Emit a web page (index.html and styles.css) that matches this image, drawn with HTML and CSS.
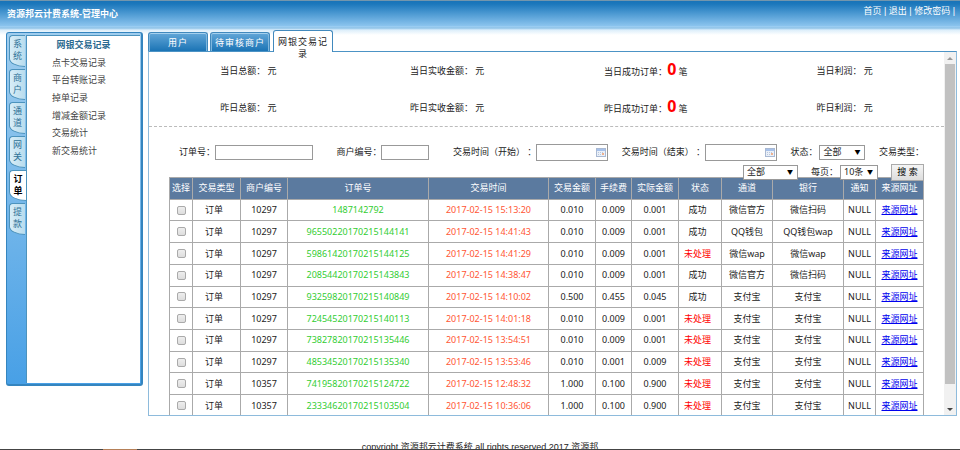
FILE: index.html
```html
<!DOCTYPE html>
<html lang="zh-CN">
<head>
    <meta charset="UTF-8">
    <meta name="viewport" content="width=device-width, initial-scale=1.0">
    <title>资源邦云计费系统-管理中心</title>
    <link rel="stylesheet" href="styles.css">
</head>
<body>

    <header class="header">
        <h1>资源邦云计费系统-管理中心</h1>
        <div class="links">
            <a href="#">首页</a> | <a href="#">退出</a> | <a href="#">修改密码</a> |
        </div>
    </header>

    <div class="container">
        <div class="left">
            <div class="rail">
                <a href="#">系<br>统</a>
                <a href="#">商<br>户</a>
                <a href="#">通<br>道</a>
                <a href="#">网<br>关</a>
                <a href="#" class="on">订<br>单</a>
                <a href="#">提<br>款</a>
            </div>
            <div class="menu">
                <ul>
                    <li class="on"><a href="#">网银交易记录</a></li>
                    <li><a href="#">点卡交易记录</a></li>
                    <li><a href="#">平台转账记录</a></li>
                    <li><a href="#">掉单记录</a></li>
                    <li><a href="#">增减金额记录</a></li>
                    <li><a href="#">交易统计</a></li>
                    <li><a href="#">新交易统计</a></li>
                </ul>
            </div>
        </div>

        <div class="right">
            <div class="tabs">
                <a href="#">用户</a>
                <a href="#">待审核商户</a>
                <a href="#" class="on">网银交易记录</a>
            </div>

            <div class="panel">
                <div class="content">
                    <div class="total">
                        <div>当日总额： 元</div>
                        <div>当日实收金额： 元</div>
                        <div>当日成功订单：<b>0</b> 笔</div>
                        <div>当日利润： 元</div>
                        <div>昨日总额： 元</div>
                        <div>昨日实收金额： 元</div>
                        <div>昨日成功订单：<b>0</b> 笔</div>
                        <div>昨日利润： 元</div>
                    </div>

                    <form action="#" class="search">
                        <div class="line">
                            <div class="item wide">
                                <label for="orderid">订单号：</label>
                                <input type="text" id="orderid" class="long">
                            </div>
                            <div class="item wide">
                                <label for="userid">商户编号：</label>
                                <input type="text" id="userid" class="short">
                            </div>
                            <div class="item">
                                <label for="begin">交易时间（开始） ：</label>
                                <span class="date">
                                    <input type="text" id="begin">
                                    <svg viewBox="0 0 10 9" width="10" height="9"><rect x="0.5" y="0.5" width="9" height="8" fill="#eaf0f8" stroke="#a9b9d3"/><rect x="1" y="1" width="8" height="2" fill="#a7c1ea"/><path d="M2 4.5h6M2 6.5h6" stroke="#b9c6dc" stroke-dasharray="1 1"/><rect x="6" y="5" width="2" height="2" fill="#eeb08e"/></svg>
                                </span>
                            </div>
                            <div class="item">
                                <label for="end">交易时间（结束） ：</label>
                                <span class="date">
                                    <input type="text" id="end">
                                    <svg viewBox="0 0 10 9" width="10" height="9"><rect x="0.5" y="0.5" width="9" height="8" fill="#eaf0f8" stroke="#a9b9d3"/><rect x="1" y="1" width="8" height="2" fill="#a7c1ea"/><path d="M2 4.5h6M2 6.5h6" stroke="#b9c6dc" stroke-dasharray="1 1"/><rect x="6" y="5" width="2" height="2" fill="#eeb08e"/></svg>
                                </span>
                            </div>
                            <div class="item">
                                <label for="state">状态：</label>
                                <span class="drop state"><select id="state"><option>全部</option></select></span>
                            </div>
                            <label for="type">交易类型：</label>
                        </div>
                        <div class="line second">
                            <span class="drop type"><select id="type"><option>全部</option></select></span>
                            <div class="item">
                                <label for="size">每页：</label>
                                <span class="drop size"><select id="size"><option>10条</option></select></span>
                            </div>
                            <button type="submit">搜 索</button>
                        </div>
                    </form>

                    <table class="list">
                        <colgroup>
                            <col class="w-check"><col class="w-type"><col class="w-money"><col><col class="w-time">
                            <col class="w-money"><col class="w-fee"><col class="w-money"><col class="w-state"><col class="w-way">
                            <col class="w-bank"><col class="w-note"><col class="w-type">
                        </colgroup>
                        <tbody>
                            <tr>
                                <th>选择</th><th>交易类型</th><th>商户编号</th><th>订单号</th><th>交易时间</th><th>交易金额</th><th>手续费</th>
                                <th>实际金额</th><th>状态</th><th>通道</th><th>银行</th><th>通知</th><th>来源网址</th>
                            </tr>
                            <tr>
                                <td><input type="checkbox" aria-label="选择"></td><td class="kind">订单</td><td>10297</td><td class="no">1487142792</td><td class="time">2017-02-15 15:13:20</td>
                                <td>0.010</td><td>0.009</td><td>0.001</td><td class="state-td">成功</td><td>微信官方</td><td>微信扫码</td><td>NULL</td><td><a href="#">来源网址</a></td>
                            </tr>
                            <tr>
                                <td><input type="checkbox" aria-label="选择"></td><td class="kind">订单</td><td>10297</td><td class="no">96550220170215144141</td><td class="time">2017-02-15 14:41:43</td>
                                <td>0.010</td><td>0.009</td><td>0.001</td><td class="state-td">成功</td><td>QQ钱包</td><td>QQ钱包wap</td><td>NULL</td><td><a href="#">来源网址</a></td>
                            </tr>
                            <tr>
                                <td><input type="checkbox" aria-label="选择"></td><td class="kind">订单</td><td>10297</td><td class="no">59861420170215144125</td><td class="time">2017-02-15 14:41:29</td>
                                <td>0.010</td><td>0.009</td><td>0.001</td><td class="state-td wait">未处理</td><td>微信wap</td><td>微信wap</td><td>NULL</td><td><a href="#">来源网址</a></td>
                            </tr>
                            <tr>
                                <td><input type="checkbox" aria-label="选择"></td><td class="kind">订单</td><td>10297</td><td class="no">20854420170215143843</td><td class="time">2017-02-15 14:38:47</td>
                                <td>0.010</td><td>0.009</td><td>0.001</td><td class="state-td">成功</td><td>微信官方</td><td>微信扫码</td><td>NULL</td><td><a href="#">来源网址</a></td>
                            </tr>
                            <tr>
                                <td><input type="checkbox" aria-label="选择"></td><td class="kind">订单</td><td>10297</td><td class="no">93259820170215140849</td><td class="time">2017-02-15 14:10:02</td>
                                <td>0.500</td><td>0.455</td><td>0.045</td><td class="state-td">成功</td><td>支付宝</td><td>支付宝</td><td>NULL</td><td><a href="#">来源网址</a></td>
                            </tr>
                            <tr>
                                <td><input type="checkbox" aria-label="选择"></td><td class="kind">订单</td><td>10297</td><td class="no">72454520170215140113</td><td class="time">2017-02-15 14:01:18</td>
                                <td>0.010</td><td>0.009</td><td>0.001</td><td class="state-td wait">未处理</td><td>支付宝</td><td>支付宝</td><td>NULL</td><td><a href="#">来源网址</a></td>
                            </tr>
                            <tr>
                                <td><input type="checkbox" aria-label="选择"></td><td class="kind">订单</td><td>10297</td><td class="no">73827820170215135446</td><td class="time">2017-02-15 13:54:51</td>
                                <td>0.010</td><td>0.009</td><td>0.001</td><td class="state-td wait">未处理</td><td>支付宝</td><td>支付宝</td><td>NULL</td><td><a href="#">来源网址</a></td>
                            </tr>
                            <tr>
                                <td><input type="checkbox" aria-label="选择"></td><td class="kind">订单</td><td>10297</td><td class="no">48534520170215135340</td><td class="time">2017-02-15 13:53:46</td>
                                <td>0.010</td><td>0.001</td><td>0.009</td><td class="state-td wait">未处理</td><td>支付宝</td><td>支付宝</td><td>NULL</td><td><a href="#">来源网址</a></td>
                            </tr>
                            <tr>
                                <td><input type="checkbox" aria-label="选择"></td><td class="kind">订单</td><td>10357</td><td class="no">74195820170215124722</td><td class="time">2017-02-15 12:48:32</td>
                                <td>1.000</td><td>0.100</td><td>0.900</td><td class="state-td wait">未处理</td><td>支付宝</td><td>支付宝</td><td>NULL</td><td><a href="#">来源网址</a></td>
                            </tr>
                            <tr>
                                <td><input type="checkbox" aria-label="选择"></td><td class="kind">订单</td><td>10357</td><td class="no">23334620170215103504</td><td class="time">2017-02-15 10:36:06</td>
                                <td>1.000</td><td>0.100</td><td>0.900</td><td class="state-td wait">未处理</td><td>支付宝</td><td>支付宝</td><td>NULL</td><td><a href="#">来源网址</a></td>
                            </tr>
                        </tbody>
                    </table>
                </div>

                <div class="scroll">
                    <span class="up"></span>
                    <span class="thumb"></span>
                    <span class="down"></span>
                </div>
            </div>
        </div>
    </div>

    <footer class="footer">copyright 资源邦云计费系统 all rights reserved 2017 资源邦</footer>
    <div class="bar"></div>

</body>
</html>
```

FILE: styles.css
```css
* {
    box-sizing: border-box;
}

body {
    margin: 0;
    height: 100vh;
    overflow: hidden;
    display: flex;
    flex-direction: column;
    font: 9px/12px "Noto Sans", "Noto Sans CJK SC", sans-serif;
    color: #222;
    background: #fff;
}

a {
    color: inherit;
    text-decoration: none;
}

/* 顶部 */
.header {
    height: 30px;
    flex: none;
    display: flex;
    justify-content: space-between;
    padding: 4px 5px 0 7px;
    color: #fff;
    border-top: 1px solid #7396ad;
    background: linear-gradient(#1873b8 0, #1c78bc 3px, #8bc4ee 25px, #a9d4f3 26px, #7fb9e2 27px, #c2e0f6 28px, #dceefa 30px);
}

.header h1 {
    margin: 3px 0 0;
    font-size: 9px;
    line-height: 12px;
}

.links {
    font-family: "Liberation Sans", "Noto Sans CJK SC", sans-serif;
}

.container {
    flex: 1;
    min-height: 0;
    display: flex;
    gap: 5px;
    padding: 0 3px 0 6px;
    background: linear-gradient(#dceefa, #fff 5px);
}

/* 左侧菜单 */
.left {
    flex: none;
    width: 137px;
    margin: 2px 0 30px;
    display: flex;
    padding: 2px 1px 1px 0;
    border: 1px solid #3585bf;
    border-right-width: 2px;
    border-bottom-width: 2px;
    border-radius: 3px;
    background: linear-gradient(#9fcdee, #48a0e6);
}

.rail {
    width: 19px;
    height: 200px;
    display: grid;
    grid-auto-rows: 1fr;
    gap: 2px;
    padding-left: 2px;
}

.rail a {
    padding-top: 2px;
    margin-right: 1px;
    text-align: center;
    color: #2f7196;
    border: 1px solid #4c93bd;
    border-right: 0;
    border-radius: 4px 0 0 17px / 4px 0 0 9px;
    background: linear-gradient(90deg, #d8edf7, #b8dcee);
}

.rail a.on {
    margin-right: 0;
    color: #000;
    font-weight: bold;
    background: #fff;
}

.menu {
    flex: 1;
    border-left: 1px solid #4c93bd;
    border-top: 1px solid #4c93bd;
    background: #fff;
}

.menu ul {
    height: 124px;
    margin: 0;
    padding: 0 0 0 25px;
    display: grid;
    grid-auto-rows: 1fr;
    align-items: center;
    list-style: none;
    color: #444;
}

.menu .on {
    margin-left: -25px;
    text-align: center;
    font-weight: bold;
    color: #2a6a90;
}

/* 右侧 */
.right {
    flex: 1;
    min-width: 0;
    display: flex;
    flex-direction: column;
}

.tabs {
    height: 21px;
    flex: none;
    display: flex;
    align-items: flex-end;
    gap: 2px;
}

.tabs a {
    width: 60px;
    height: 19px;
    padding: 4px 2px 0;
    text-align: center;
    letter-spacing: 1px;
    white-space: nowrap;
    color: #fff;
    border: 1px solid #4189bd;
    border-bottom: 0;
    border-radius: 3px 3px 0 0;
    box-shadow: inset 0 1px #a5d0ed, inset 1px 0 #7db6dd, inset -1px 0 #7db6dd;
    background: linear-gradient(#63a7d8, #1b74b5);
}

.tabs a.on {
    height: 22px;
    margin: 0 0 -1px 1px;
    padding-top: 5px;
    white-space: normal;
    color: #222;
    box-shadow: none;
    background: #fff;
    z-index: 1;
}

.panel {
    flex: 1;
    min-height: 0;
    display: flex;
    border: 1px solid #8ebbdc;
    border-top-color: #4c93c5;
}

.content {
    flex: 1;
    min-width: 0;
    overflow: hidden;
}

.total {
    display: grid;
    grid-template-columns: repeat(4, 1fr);
    grid-auto-rows: 37px;
    align-items: center;
    text-align: center;
    border-bottom: 1px dashed #bbb;
}

.total b {
    font-size: 16px;
    color: #f00;
}

/* 查询条件 */
.search {
    margin: 0 20px -5px;
    padding-top: 15px;
}

.line {
    display: flex;
    justify-content: space-between;
    align-items: center;
    height: 20px;
    padding-left: 10px;
    white-space: nowrap;
}

.second {
    justify-content: flex-end;
    gap: 13px;
}

.item {
    display: flex;
    align-items: center;
}

.wide {
    margin-right: 10px;
}

.search input, .search select {
    font: inherit;
    color: #222;
    background: #fff;
    border: 1px solid #999;
    border-radius: 0;
    margin: 0;
    padding: 0 3px;
    height: 15px;
}

.search .long {
    width: 98px;
}

.search .short {
    width: 48px;
}

.date, .drop {
    position: relative;
    display: flex;
}

.item .drop {
    margin-left: 2px;
}

.search .date input {
    width: 72px;
    height: 17px;
}

.date svg {
    position: absolute;
    right: 2px;
    top: 4px;
}

.search select {
    width: 100%;
    appearance: none;
}

.drop::after {
    content: "▼";
    position: absolute;
    right: 5px;
    top: 1px;
    font-size: 6px;
    color: #000;
    pointer-events: none;
}

.state {
    width: 46px;
}

.type {
    width: 55px;
}

.size {
    width: 38px;
}

.search button {
    width: 33px;
    height: 17px;
    padding: 0;
    font: inherit;
    color: #000;
    border: 1px solid #aaa;
    background: linear-gradient(#f5f5f5, #ddd);
}

/* 订单列表 */
.list {
    width: calc(100% - 40px);
    height: 240px;
    margin: 0 20px;
    table-layout: fixed;
    border-collapse: collapse;
    text-align: center;
    white-space: nowrap;
}

.list th, .list td {
    padding: 0;
    border: 1px solid #aaa;
}

.list th {
    font-weight: normal;
    color: #fff;
    background: #5b7a9f;
}

.list .kind, .list .state-td {
    padding-right: 5px;
}

.list .no {
    color: #32cd32;
}

.list .time {
    color: #ff5533;
}

.list .wait {
    color: #f00;
}

.list td a {
    color: #00e;
    text-decoration: underline;
}

.list input {
    display: block;
    appearance: none;
    width: 9px;
    height: 9px;
    margin: 0 auto;
    border: 1px solid #aaa;
    border-radius: 2px;
    background: linear-gradient(#eee, #ddd);
}

.w-check { width: 23px; }
.w-type { width: 48px; }
.w-time { width: 120px; }
.w-money { width: 47px; }
.w-fee { width: 36px; }
.w-state { width: 43px; }
.w-way { width: 51px; }
.w-bank { width: 71px; }
.w-note { width: 32px; }

/* 滚动条 */
.scroll {
    width: 12px;
    flex: none;
    display: flex;
    flex-direction: column;
    align-items: center;
    padding: 5px 0 4px;
    background: #f1f1f1;
}

.up, .down {
    border: 3px solid transparent;
}

.up {
    border-top: 0;
    border-bottom-color: #999;
}

.down {
    border-bottom: 0;
    border-top-color: #444;
}

.thumb {
    flex: 1;
    width: 10px;
    margin: 4px 0 24px;
    background: #c1c1c1;
}

/* 底部 */
.footer {
    height: 34px;
    flex: none;
    padding-top: 25px;
    text-align: center;
    font-family: "Liberation Sans", "Noto Sans CJK SC", sans-serif;
}

.bar {
    position: fixed;
    left: 0;
    right: 0;
    bottom: 0;
    height: 1px;
    background: linear-gradient(90deg, #444 103px, #b58058 103px, #b58058 137px, #444 137px);
}
```
